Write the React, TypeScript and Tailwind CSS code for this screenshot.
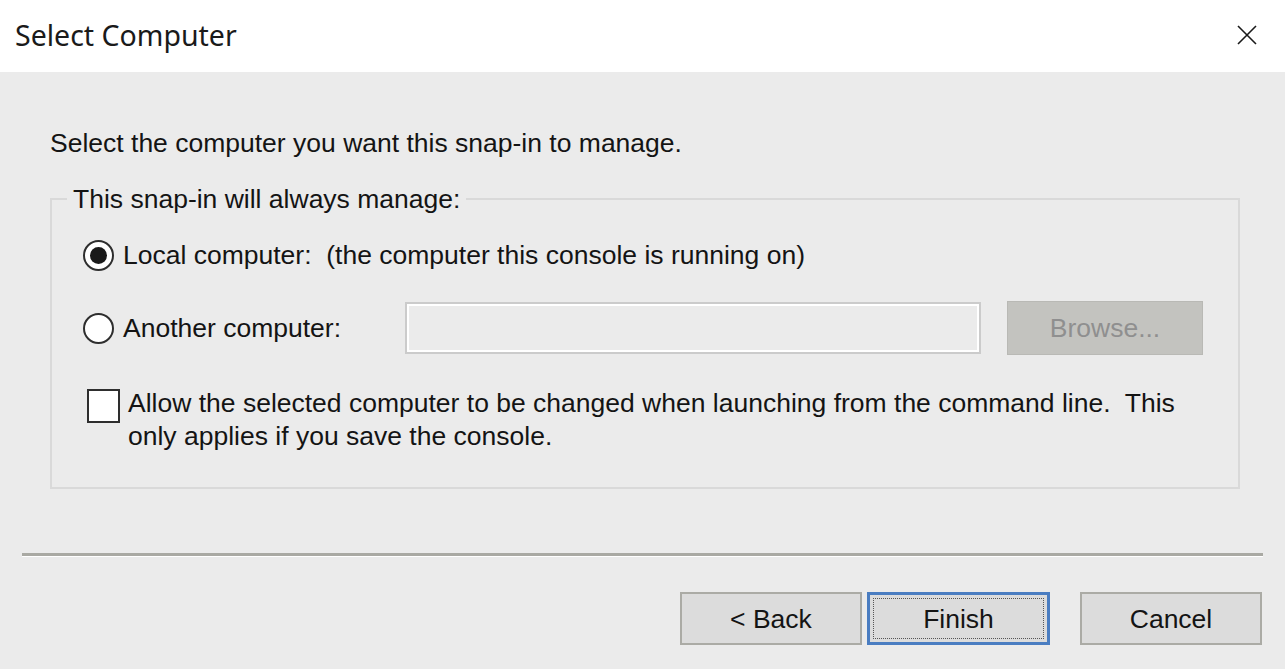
import React from "react";

const txt = "font-['Liberation_Sans',Arial,sans-serif] text-[26.5px] leading-[30px] text-[#141414]";

function Radio({ checked }: { checked?: boolean }) {
  return (
    <div className="w-[31px] h-[31px] shrink-0 rounded-full border-2 border-[#2e2e2e] bg-white flex items-center justify-center">
      {checked && <div className="w-[17px] h-[17px] rounded-full bg-[#1a1a1a]" />}
    </div>
  );
}

function Btn({ label, focused }: { label: string; focused?: boolean }) {
  return (
    <div
      className={
        "h-[53px] flex items-center justify-center bg-[#dcdcdc] " +
        (focused ? "w-[183px] border-[3px] border-[#4a7dc1]" : "w-[182px] border-2 border-[#ababa5]")
      }
    >
      <div
        className={
          "flex items-center justify-center " +
          (focused ? "w-[171px] h-[41px] border border-dotted border-[#555]" : "w-full h-full")
        }
      >
        <span className={txt}>{label}</span>
      </div>
    </div>
  );
}

export default function App() {
  return (
    <div className="w-full h-[669px] flex flex-col bg-[#ebebeb] overflow-hidden">
      <div className="h-[72px] bg-white flex items-center justify-between pl-[15px] pr-[28px] shrink-0">
        <span className="font-['Noto_Sans',sans-serif] text-[28.5px] leading-none text-[#1a1a1a] pb-[2px]">
          Select Computer
        </span>
        <svg width="20" height="20" viewBox="0 0 20 20" className="mt-[-2px]">
          <path d="M1 1 L19 19 M19 1 L1 19" stroke="#1a1a1a" strokeWidth="1.6" />
        </svg>
      </div>
      <div className="flex-1 flex flex-col px-[22px] pt-[56px]">
        <div className="pl-[28px] pr-[23px] flex flex-col">
          <p className={txt}>Select the computer you want this snap-in to manage.</p>
          <fieldset className="mt-[26px] border-2 border-[#d9d9d9] pb-[34px]">
            <legend className={"ml-[15px] px-[6px] " + txt}>This snap-in will always manage:</legend>
            <div className="pl-[31px]">
              <div className="mt-[21px] h-[40px] flex items-center">
                <Radio checked />
                <span className={"ml-[9px] whitespace-pre " + txt}>Local computer:  (the computer this console is running on)</span>
              </div>
              <div className="mt-[26px] h-[54px] flex items-center">
                <Radio />
                <span className={"ml-[9px] w-[282px] " + txt}>Another computer:</span>
                <div className="w-[576px] h-[52px] border-2 border-[#cbcbcb] bg-[#ebebeb] shadow-[inset_0_0_0_2px_#ffffff]" />
                <div className="ml-[26px] w-[196px] h-[54px] bg-[#c3c3bf] border border-[#b9b9b5] flex items-center justify-center">
                  <span className="font-['Liberation_Sans',Arial,sans-serif] text-[26.5px] leading-[30px] text-[#8f8f8f]">Browse...</span>
                </div>
              </div>
              <div className="mt-[32px] flex items-start">
                <div className="ml-[4px] mt-[2px] w-[33px] h-[34px] shrink-0 border-2 border-[#2e2e2e] bg-white" />
                <p className="ml-[8px] leading-[33px] whitespace-pre font-['Liberation_Sans',Arial,sans-serif] text-[26.5px] text-[#141414]">
                  {"Allow the selected computer to be changed when launching from the command line.  This\nonly applies if you save the console."}
                </p>
              </div>
            </div>
          </fieldset>
        </div>
        <div className="mt-[64px] h-[4px] bg-[#a9a9a3] border-b border-white" />
        <div className="mt-[35px] flex justify-end pr-[1px]">
          <Btn label="< Back" />
          <div className="ml-[5px]">
            <Btn label="Finish" focused />
          </div>
          <div className="ml-[30px]">
            <Btn label="Cancel" />
          </div>
        </div>
      </div>
    </div>
  );
}
